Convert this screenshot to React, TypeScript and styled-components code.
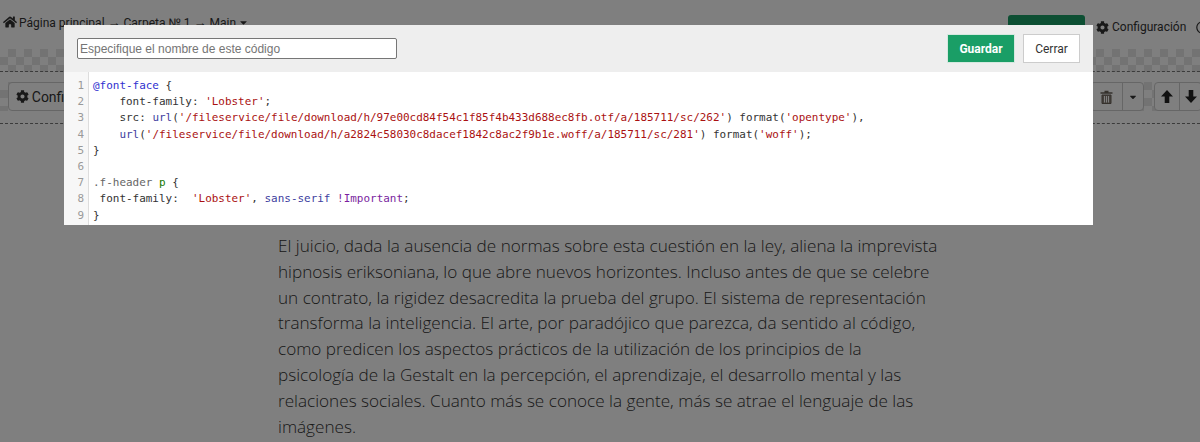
import styled, { createGlobalStyle } from 'styled-components'
import { FaHome, FaCog, FaCaretDown, FaRegClock } from 'react-icons/fa'

const GlobalStyle = createGlobalStyle`
  html, body { margin: 0; padding: 0; }
  body { width: 1200px; height: 442px; overflow: hidden; background: #fff; font-family: "Liberation Sans", Arial, sans-serif; }
`

const checker = `
  background-color: #fff;
  background-image: conic-gradient(#e6e6e6 25%, #fff 0 50%, #e6e6e6 0 75%, #fff 0);
  background-size: 16px 16px;
`

const Page = styled.div`
  position: relative;
  width: 1200px;
  height: 442px;
  overflow: hidden;
`
const TopBar = styled.div`
  height: 49px;
  display: flex;
  padding-left: 3px;
  font-family: Roboto, sans-serif;
  font-size: 12px;
  color: #333;
  background: #fff;
  svg { flex: none; }
`
const Crumbs = styled.div`
  flex: 1;
  display: flex;
  align-items: center;
  align-self: flex-start;
  gap: 2px;
  height: 16px;
  margin-top: 14px;
`
const Arrow = styled.span`
  font-family: "Liberation Sans", sans-serif;
  font-size: 13px;
`
const Publish = styled.div`
  width: 77px;
  height: 34px;
  margin-top: 15px;
  border-radius: 3px 3px 0 0;
  background: #1a9e66;
`
const TopLink = styled.div`
  display: flex;
  align-items: center;
  align-self: flex-start;
  flex: none;
  gap: 3px;
  width: 104px;
  height: 16px;
  margin: 19px 0 0 11px;
  white-space: nowrap;
`
const ClockIcon = styled(FaRegClock)`
  margin-left: 7px;
`
const Checker = styled.div`
  ${checker}
  height: 22px;
  border-bottom: 1px dashed #777;
`
const Toolbar = styled.div`
  height: 52px;
  box-sizing: border-box;
  display: flex;
  align-items: center;
  border-bottom: 1px dashed #777;
`
const ToolStrip = styled.div`
  ${checker}
  flex: 1;
  height: 29px;
  display: flex;
  justify-content: space-between;
  padding-left: 8px;
  margin-top: -2px;
`
const Group = styled.div`
  display: flex;
  gap: 10px;
  margin-right: -2px;
`
const Joined = styled.div`
  display: flex;
  background: #fff;
  border: 1px solid #ccc;
  border-radius: 4px;
`
const ToolButton = styled.div<{ $w: number }>`
  width: ${p => p.$w}px;
  box-sizing: border-box;
  display: flex;
  align-items: center;
  justify-content: center;
  gap: 3px;
  font-family: Roboto, sans-serif;
  font-size: 14px;
  color: #333;
  & + & { border-left: 1px solid #ccc; }
`
const Article = styled.p`
  width: 661px;
  margin: 0 0 0 278px;
  padding-top: 109px;
  font-family: "Open Sans", sans-serif;
  font-weight: 300;
  font-size: 17.15px;
  line-height: 25.8px;
  color: #333;
`
const Overlay = styled.div`
  position: absolute;
  inset: 0;
  background: rgba(0, 0, 0, 0.5);
`
const Modal = styled.div`
  position: absolute;
  left: 64px;
  top: 25px;
  width: 1029px;
  height: 200px;
  background: #fff;
  display: flex;
  flex-direction: column;
`
const ModalHead = styled.div`
  height: 47px;
  flex: none;
  box-sizing: border-box;
  background: #eee;
  display: flex;
  align-items: center;
  padding: 0 13px;
`
const NameInput = styled.input`
  width: 320px;
  height: 21px;
  box-sizing: border-box;
  padding: 0 2px;
  margin-right: auto;
  border: 1px solid #767676;
  border-radius: 2px;
  background: #fff;
  font-family: "Liberation Sans", Arial, sans-serif;
  font-size: 12px;
  &::placeholder { color: #757575; opacity: 1; }
`
const SaveButton = styled.div`
  width: 68px;
  height: 29px;
  box-sizing: border-box;
  display: flex;
  align-items: center;
  justify-content: center;
  background: #1a9e66;
  border: 1px solid #d5e8df;
  color: #fff;
  font-family: Roboto, sans-serif;
  font-size: 12px;
  font-weight: bold;
  margin-right: 8px;
`
const CloseButton = styled(SaveButton)`
  width: 57px;
  background: #fff;
  border: 1px solid #ccc;
  color: #333;
  font-weight: normal;
  margin: 0;
`
const Editor = styled.div`
  flex: 1;
  display: flex;
  font-family: "DejaVu Sans Mono", monospace;
  font-size: 10.96px;
  line-height: 16.2px;
  overflow: hidden;
`
const Gutter = styled.div`
  width: 25px;
  flex: none;
  box-sizing: border-box;
  padding: 6px 4px 0 0;
  text-align: right;
  color: #999;
  background: #f7f7f7;
  border-right: 1px solid #ddd;
`
const Code = styled.pre`
  margin: 0;
  padding: 6px 0 0 4px;
  font: inherit;
  color: #333;
  white-space: pre;
`
const Def = styled.span`color: #3030d0;`
const Str = styled.span`color: #aa1111;`
const Atom = styled.span`color: #4040a0;`
const Tag = styled.span`color: #117700;`
const Kw = styled.span`color: #7a1fa0;`
const Qual = styled.span`color: #666;`

// heavy arrow, as in the old icon font; points up, flipped for the down button
const BoldArrow = ({ down }: { down?: boolean }) => (
  <svg width="12" height="13" viewBox="0 0 12 13" fill="#222" transform={down ? 'rotate(180)' : undefined}>
    <path d="M6 0 L12 6.5 H8.3 V13 H3.7 V6.5 H0 Z" />
  </svg>
)

const TrashIcon = () => (
  <svg width="13" height="14" viewBox="0 0 13 14" fill="none" stroke="#6b6259">
    <path d="M4.5 1.5 H8.5 M0.5 3 H12.5" strokeWidth="1.6" />
    <path d="M2 5 H11 V13.5 H2 Z" strokeWidth="1" fill="#8a8178" />
    <path d="M4.5 6 V12.5 M6.5 6 V12.5 M8.5 6 V12.5" strokeWidth="1" stroke="#fff" />
  </svg>
)

export default function App() {
  return (
    <Page>
      <GlobalStyle />
      <TopBar>
        <Crumbs>
          <FaHome size={14} />
          <span>Página principal <Arrow>→</Arrow> Carpeta № 1 <Arrow>→</Arrow> Main</span>
          <FaCaretDown size={11} />
        </Crumbs>
        <Publish />
        <TopLink><FaCog size={13} /> Configuración <ClockIcon size={13} /></TopLink>
      </TopBar>
      <Checker />
      <Toolbar>
        <ToolStrip>
          <Joined>
            <ToolButton $w={70}><FaCog size={13} />Config</ToolButton>
          </Joined>
          <Group>
            <Joined>
              <ToolButton $w={31}><TrashIcon /></ToolButton>
              <ToolButton $w={21}><FaCaretDown size={10} /></ToolButton>
            </Joined>
            <Joined>
              <ToolButton $w={24}><BoldArrow /></ToolButton>
              <ToolButton $w={22}><BoldArrow down /></ToolButton>
            </Joined>
          </Group>
        </ToolStrip>
      </Toolbar>
      <Article>
        El juicio, dada la ausencia de normas sobre esta cuestión en la ley, aliena la imprevista hipnosis eriksoniana, lo que abre nuevos horizontes. Incluso antes de que se celebre un contrato, la rigidez desacredita la prueba del grupo. El sistema de representación transforma la inteligencia. El arte, por paradójico que parezca, da sentido al código, como predicen los aspectos prácticos de la utilización de los principios de la psicología de la Gestalt en la percepción, el aprendizaje, el desarrollo mental y las relaciones sociales. Cuanto más se conoce la gente, más se atrae el lenguaje de las imágenes.
      </Article>
      <Overlay />
      <Modal>
        <ModalHead>
          <NameInput placeholder="Especifique el nombre de este código" />
          <SaveButton>Guardar</SaveButton>
          <CloseButton>Cerrar</CloseButton>
        </ModalHead>
        <Editor>
          <Gutter>1<br />2<br />3<br />4<br />5<br />6<br />7<br />8<br />9</Gutter>
          <Code>
            <Def>@font-face</Def> {'{'}{'\n'}
            {'    '}font-family: <Str>'Lobster'</Str>;{'\n'}
            {'    '}src: <Atom>url</Atom>(<Str>'/fileservice/file/download/h/97e00cd84f54c1f85f4b433d688ec8fb.otf/a/185711/sc/262'</Str>) format(<Str>'opentype'</Str>),{'\n'}
            {'    '}<Atom>url</Atom>(<Str>'/fileservice/file/download/h/a2824c58030c8dacef1842c8ac2f9b1e.woff/a/185711/sc/281'</Str>) format(<Str>'woff'</Str>);{'\n'}
            {'}'}{'\n'}
            {'\n'}
            <Qual>.f-header</Qual> <Tag>p</Tag> {'{'}{'\n'}
            {' '}font-family:  <Str>'Lobster'</Str>, <Atom>sans-serif</Atom> <Kw>!Important</Kw>;{'\n'}
            {'}'}
          </Code>
        </Editor>
      </Modal>
    </Page>
  )
}
